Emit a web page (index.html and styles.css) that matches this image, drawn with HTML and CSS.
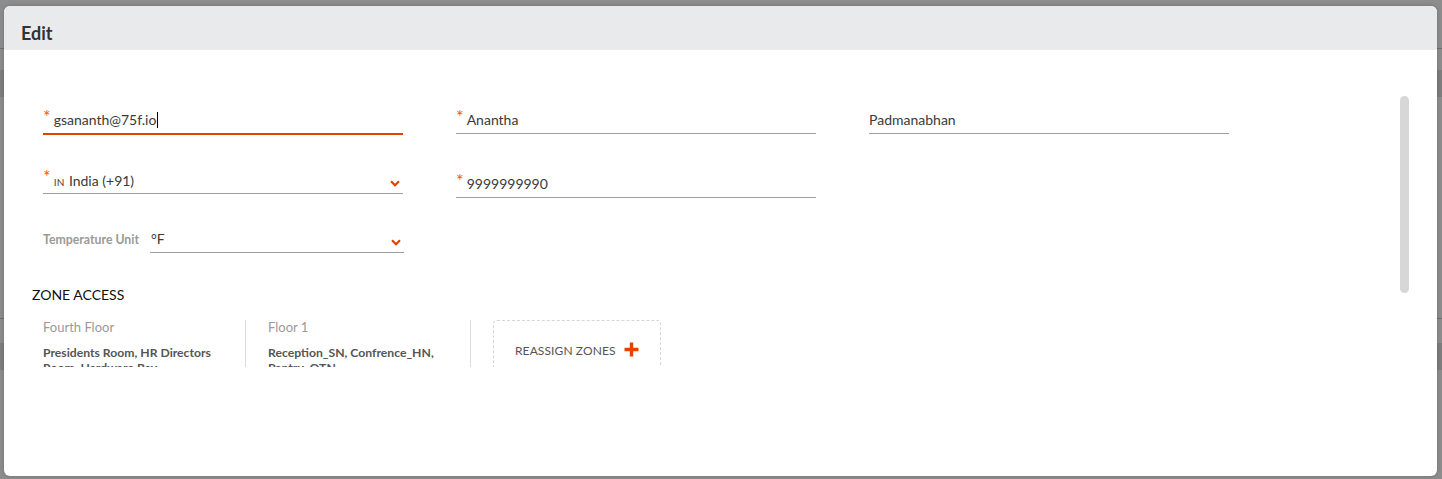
FILE: index.html
```html
<!DOCTYPE html>
<html lang="en">
<head>
  <meta charset="UTF-8" />
  <meta name="viewport" content="width=device-width, initial-scale=1.0"/>
  <title>Edit User</title>
  <link rel="stylesheet" href="styles.css">
</head>
<body>
  <div class="backdrop">
    <div class="bg-line"></div>
    <div class="bg-band"></div>
    <div class="bg-line bg-line-low"></div>
    <div class="bg-band bg-band-low"></div>
  </div>

  <div class="modal">
    <div class="modal-header">
      <h2>Edit</h2>
    </div>

    <div class="modal-body">
      <div class="form">
        <div class="form-row">
          <div class="field field-active">
            <span class="req">*</span>
            <span class="value">gsananth@75f.io<span class="caret"></span></span>
          </div>
          <div class="field">
            <span class="req">*</span>
            <span class="value">Anantha</span>
          </div>
          <div class="field">
            <span class="value">Padmanabhan</span>
          </div>
        </div>

        <div class="form-row">
          <div class="field">
            <span class="req">*</span>
            <span class="value"><span class="flag">IN</span> India (+91)</span>
            <svg class="chevron" width="10" height="7" viewBox="0 0 10 7"><path d="M1 1.2 L5 5.2 L9 1.2" fill="none" stroke="#e24301" stroke-width="2.2"/></svg>
          </div>
          <div class="field field-phone">
            <span class="req">*</span>
            <span class="value">9999999990</span>
          </div>
        </div>

        <div class="form-row">
          <div class="temp-field">
            <label class="temp-label">Temperature Unit</label>
            <div class="field field-select">
              <span class="value">°F</span>
              <svg class="chevron" width="10" height="7" viewBox="0 0 10 7"><path d="M1 1.2 L5 5.2 L9 1.2" fill="none" stroke="#e24301" stroke-width="2.2"/></svg>
            </div>
          </div>
        </div>
      </div>

      <h3 class="section-title">ZONE ACCESS</h3>

      <div class="zone-list">
        <div class="zone-card">
          <div class="zone-floor">Fourth Floor</div>
          <div class="zone-rooms">Presidents Room, HR Directors Room, Hardware Bay</div>
        </div>
        <div class="zone-card">
          <div class="zone-floor">Floor 1</div>
          <div class="zone-rooms">Reception_SN, Confrence_HN, Pantry_OTN</div>
        </div>
        <button class="reassign">
          REASSIGN ZONES
          <svg width="15" height="15" viewBox="0 0 15 15"><path d="M7.5 0.5 V14.5 M0.5 7.5 H14.5" stroke="#e24301" stroke-width="3.4"/></svg>
        </button>
      </div>
    </div>

    <div class="modal-footer"></div>
    <div class="scroll-thumb"></div>
  </div>
</body>
</html>
```

FILE: styles.css
```css
:root {
  --accent: #e24301;
  --text: #333;
  --muted: #9a9a9a;
  --line: #9e9e9e;
  --divider: #dcdcdc;
}

html, body {
  margin: 0;
  height: 100%;
}

body {
  background-color: #8d8d8d;
  font-family: Lato, 'Open Sans', sans-serif;
  color: var(--text);
  overflow: hidden;
}

.backdrop {
  padding-top: 48px;
}

.bg-line {
  height: 1px;
  background-color: #6f6f6f;
}

.bg-band {
  height: 27px;
  margin-top: 21px;
  background-color: #7d7d7d;
}

.bg-line-low {
  margin-top: 221px;
}

.bg-band-low {
  margin-top: 24px;
}

.modal {
  position: absolute;
  left: 4px;
  top: 6px;
  width: 1433px;
  height: 470px;
  background-color: #fff;
  border-radius: 6px;
  overflow: hidden;
  display: flex;
  flex-direction: column;
  box-shadow: 0 0 4px rgba(0, 0, 0, 0.2);
}

.modal-header {
  background-color: #e9eaec;
  padding: 15px 17px 5px;
}

.modal-header h2 {
  margin: 0;
  font-size: 18px;
  line-height: 24px;
  font-weight: bold;
  color: #333;
}

.modal-body {
  height: 317px;
  flex-shrink: 0;
  box-sizing: border-box;
  padding: 58px 28px 0;
  overflow: hidden;
}

.modal-footer {
  flex: 1;
}

.form {
  display: grid;
  grid-template-rows: 60px 59px 26px;
  padding-left: 11px;
}

.form-row {
  display: flex;
  align-items: flex-start;
  gap: 53px;
}

.field {
  width: 360px;
  height: 26px;
  box-sizing: border-box;
  border-bottom: 1px solid var(--line);
  display: flex;
  align-items: flex-start;
  font-size: 14px;
}

.field-active {
  border-bottom-color: var(--accent);
  box-shadow: 0 1px 0 var(--accent);
}

.field-phone {
  margin-top: 4px;
}

.req {
  color: #f05a22;
  font-size: 18px;
  line-height: 14px;
  margin: 1px 3px 0 0;
}

.value {
  line-height: 20px;
  margin-top: 2px;
  display: flex;
  align-items: center;
  white-space: nowrap;
  color: #3a3a3a;
}

.caret {
  display: inline-block;
  width: 1px;
  height: 16px;
  background-color: #000;
  margin-left: 1px;
}

.flag {
  font-size: 10px;
  letter-spacing: 0.4px;
  color: #444;
  margin-right: 4px;
  padding-top: 2px;
}

.chevron {
  margin: 12px 3px 0 auto;
}

.temp-field {
  width: 361px;
  display: flex;
  align-items: flex-start;
}

.temp-label {
  font-size: 12.3px;
  font-weight: bold;
  color: var(--muted);
  line-height: 16px;
  margin: 5px 11px 0 0;
  white-space: nowrap;
}

.field-select {
  flex: 1;
  width: auto;
}

.field-select .value {
  margin-left: 1px;
}

.section-title {
  margin: 32px 0 15px;
  font-size: 14px;
  line-height: 20px;
  font-weight: normal;
  color: #111;
}

.zone-list {
  display: flex;
  align-items: flex-start;
  padding-left: 11px;
}

.zone-card {
  width: 202px;
  height: 47px;
  border-right: 1px solid var(--divider);
  margin-right: 22px;
}

.zone-floor {
  font-size: 13px;
  line-height: 16px;
  color: var(--muted);
  margin-top: -1px;
}

.zone-rooms {
  font-size: 12.2px;
  line-height: 15px;
  font-weight: bold;
  color: #555;
  margin-top: 10px;
}

.reassign {
  width: 168px;
  height: 80px;
  box-sizing: border-box;
  border: 1px dashed #d6d6d6;
  border-radius: 4px;
  background: none;
  padding: 22px 0 0 21px;
  display: flex;
  align-items: flex-start;
  gap: 8px;
  font-family: inherit;
  font-size: 12px;
  line-height: 16px;
  color: #555;
  letter-spacing: 0.1px;
  cursor: pointer;
}

.reassign svg {
  flex-shrink: 0;
  margin-top: -1px;
}

.scroll-thumb {
  position: absolute;
  left: 1396px;
  top: 90px;
  width: 9px;
  height: 197px;
  border-radius: 5px;
  background-color: #d7d7d7;
}
```
